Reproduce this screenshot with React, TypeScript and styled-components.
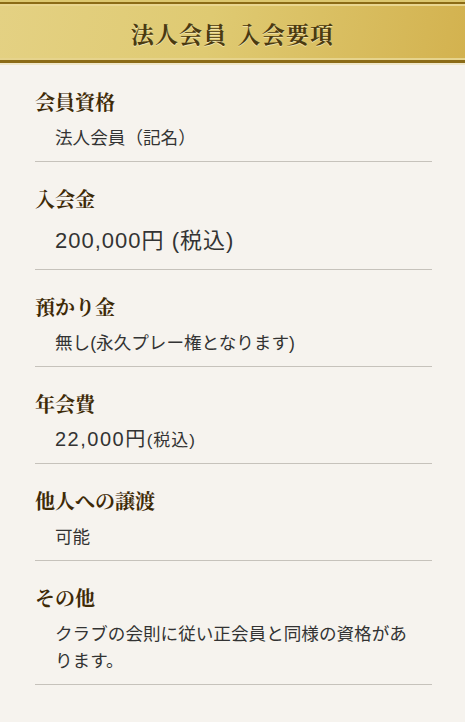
import React from 'react';
import styled, { createGlobalStyle } from 'styled-components';

const GlobalStyle = createGlobalStyle`
  html, body {
    margin: 0;
    padding: 0;
    background-color: #f6f3ee;
  }
  body {
    font-family: "Liberation Sans", "Noto Sans CJK JP", sans-serif;
    min-height: 100vh;
  }
`;

const Page = styled.div`
  min-height: 100vh;
  background-color: #f6f3ee;
`;

const Header = styled.header`
  height: 65px;
  display: flex;
  align-items: center;
  justify-content: center;
  background: linear-gradient(100deg, #e4d183 0%, #dfca72 45%, #d3b24f 100%);
  box-shadow:
    inset 0 2px 0 #dcc76e,
    inset 0 4px 0 #8b6b16,
    inset 0 6px 0 #e9d690,
    inset 0 -2px 0 #efe6c8,
    inset 0 -5px 0 #8b6b16,
    inset 0 -7px 0 #e6d38c;
`;

const Title = styled.h1`
  margin: 0;
  padding-top: 1px;
  font-family: "Noto Serif CJK JP", "Noto Sans CJK JP", serif;
  font-size: 23px;
  font-weight: 700;
  letter-spacing: 1.2px;
  color: #4b3a10;
  text-shadow: 0 1px 0 rgba(255, 248, 220, 0.6);
`;

const Gap = styled.span`
  display: inline-block;
  width: 10px;
`;

const List = styled.main`
  padding: 0 33px 0 35px;
`;

const Section = styled.section`
  padding: 22px 0 9px;
  border-bottom: 1px solid #c6c2bb;
`;

const Heading = styled.h2`
  margin: 0;
  font-family: "Noto Serif CJK JP", "Noto Sans CJK JP", serif;
  font-size: 20px;
  line-height: 30px;
  font-weight: 700;
  color: #3e2a07;
`;

const Body = styled.p<{ $large?: boolean }>`
  margin: 8px 0 0;
  padding: 0 20px 0 20px;
  font-size: ${({ $large }) => ($large ? '22px' : '17.6px')};
  line-height: ${({ $large }) => ($large ? '38px' : '27px')};
  letter-spacing: ${({ $large }) => ($large ? '1px' : '0')};
  color: #333;
`;

const Price = styled.span`
  font-size: 20px;
  line-height: 1;
  letter-spacing: 1.5px;
`;

const Small = styled.span`
  font-size: 17px;
  line-height: 1;
  letter-spacing: 1px;
`;

interface IItem {
  title: string;
  body: React.ReactNode;
  large?: boolean;
}

const ITEMS: IItem[] = [
  { title: '会員資格', body: '法人会員（記名）' },
  { title: '入会金', body: '200,000円 (税込)', large: true },
  { title: '預かり金', body: '無し(永久プレー権となります)' },
  {
    title: '年会費',
    body: (
      <>
        <Price>22,000円</Price>
        <Small>(税込)</Small>
      </>
    ),
  },
  { title: '他人への譲渡', body: '可能' },
  { title: 'その他', body: 'クラブの会則に従い正会員と同様の資格があります。' },
];

const App = () => {
  return (
    <Page>
      <GlobalStyle />
      <Header>
        <Title>
          法人会員<Gap />入会要項
        </Title>
      </Header>
      <List>
        {ITEMS.map((item) => (
          <Section key={item.title}>
            <Heading>{item.title}</Heading>
            <Body $large={item.large}>{item.body}</Body>
          </Section>
        ))}
      </List>
    </Page>
  );
};

export default App;
